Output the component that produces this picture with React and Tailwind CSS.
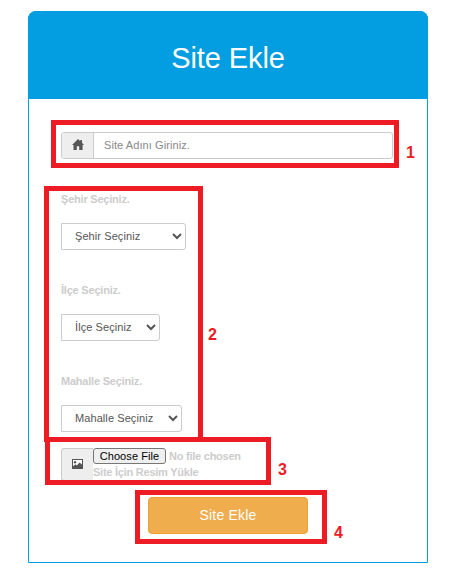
import React from "react";

function HomeIcon() {
  return (
    <svg width="12" height="11" viewBox="0 0 12 11" fill="#555">
      <path d="M6 0 L8.3 2.2 V1 H10 V3.8 L12 6 H10.6 V11 H7.2 V7.2 H4.8 V11 H1.5 V6 H0 Z" />
    </svg>
  );
}

function PictureIcon() {
  return (
    <svg width="11" height="10" viewBox="0 0 11 10">
      <path fill="#fff" d="M1 1H10V9H1Z" />
      <path fill="#555" fillRule="evenodd" d="M0 0H11V10H0ZM1 1V9H10V1Z" />
      <circle cx="3" cy="3.2" r="1.2" fill="#555" />
      <path fill="#555" d="M1 9V7.3L3.5 5.3L4.8 6.5L7.5 3.6L10 5.6V9Z" />
    </svg>
  );
}

function SelectField({ label, text, width, last }) {
  return (
    <div className={last ? "h-[75px]" : "h-[91px]"}>
      <label className="block h-[32px] text-[11px] leading-[16px] font-bold tracking-[-0.21px] text-[#ccc]">{label}</label>
      <select
        className={`block h-[27px] rounded-r-[3px] border border-[#ccc] bg-white pr-[1px] pb-[2px] pl-[9px] text-[11px] tracking-[0.08px] text-[#555] ${width}`}
      >
        <option>{text}</option>
      </select>
    </div>
  );
}

function Mark({ box, num, children }) {
  return (
    <>
      <div className={`pointer-events-none absolute border-[5px] border-[#ed1c24] ${box}`} />
      <span className={`absolute text-[16px] leading-[18px] font-bold text-[#ed1c24] ${num}`}>{children}</span>
    </>
  );
}

export default function App() {
  return (
    <div className="relative h-[575px] w-[451px] overflow-hidden bg-white pt-[11px] pl-[28px] font-['Liberation_Sans',Arial,sans-serif]">
      <div className="h-[552px] w-[400px] rounded-t-[8px] border border-[#029ee1] bg-white">
        <div className="-mx-px -mt-px flex h-[88px] items-center justify-center rounded-t-[8px] bg-[#029ee1] pt-[5px]">
          <h1 className="text-[29px] leading-[32px] tracking-[-0.1px] text-white">Site Ekle</h1>
        </div>
        <form className="flex flex-col pt-[33px] pl-[32px]">
          <div className="flex h-[27px] w-[332px] overflow-hidden rounded-[3px] border border-[#ccc]">
            <span className="flex w-[32px] shrink-0 items-center justify-center border-r border-[#ccc] bg-[#eee] pb-[2px]">
              <HomeIcon />
            </span>
            <input
              className="min-w-0 flex-1 px-[10px] text-[11px] tracking-[0.08px] text-[#555] outline-none placeholder:text-[#888]"
              placeholder="Site Adını Giriniz."
            />
          </div>
          <div className="mt-[32px]">
            <SelectField label="Şehir Seçiniz." text="Şehir Seçiniz" width="w-[125px]" />
            <SelectField label="İlçe Seçiniz." text="İlçe Seçiniz" width="w-[99px]" />
            <SelectField label="Mahalle Seçiniz." text="Mahalle Seçiniz" width="w-[121px]" last />
          </div>
          <div className="flex h-[33px]">
            <span className="flex w-[32px] items-center justify-center rounded-l-[3px] border border-r-0 border-[#ccc] bg-[#eee] pb-[2px]">
              <PictureIcon />
            </span>
            <div className="text-[11px] font-bold tracking-[-0.24px] text-[#ccc]">
              <div className="flex h-[16px] items-center">
                <button
                  type="button"
                  className="h-[16px] w-[73px] rounded-[3px] border border-[#767676] bg-[#efefef] text-[11px] leading-[14px] font-normal tracking-[0.08px] whitespace-nowrap text-black"
                >
                  Choose File
                </button>
                <span className="ml-[3px]">No file chosen</span>
              </div>
              <div className="leading-[16px]">Site İçin Resim Yükle</div>
            </div>
          </div>
          <button
            type="button"
            className="mt-[16px] ml-[86px] h-[37px] w-[160px] self-start rounded-[4px] border border-[#eea236] bg-[#f0ad4e] text-[14px] tracking-[0.2px] text-white translate-x-px"
          >
            Site Ekle
          </button>
        </form>
      </div>
      <Mark box="top-[120px] left-[51px] h-[48px] w-[348px]" num="top-[144px] left-[406px]">1</Mark>
      <Mark box="top-[186px] left-[44px] h-[256px] w-[159px]" num="top-[326px] left-[208px]">2</Mark>
      <Mark box="top-[437px] left-[45px] h-[48px] w-[226px]" num="top-[461px] left-[278px]">3</Mark>
      <Mark box="top-[490px] left-[135px] h-[54px] w-[192px]" num="top-[524px] left-[334px]">4</Mark>
    </div>
  );
}
